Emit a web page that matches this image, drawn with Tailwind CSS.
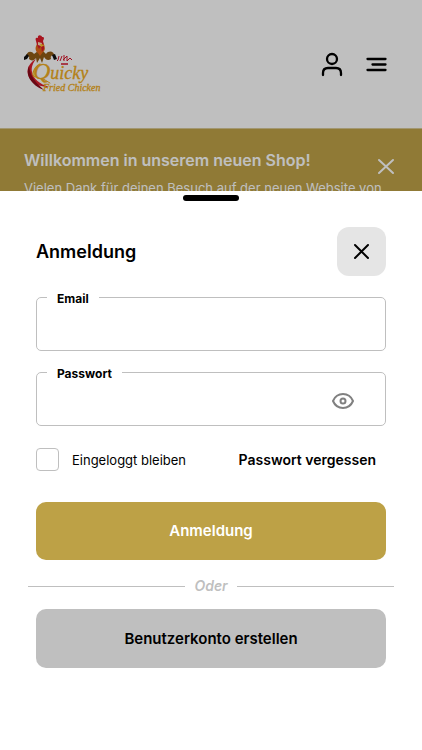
<!DOCTYPE html>
<html lang="de">
<head>
<meta charset="utf-8">
<meta name="viewport" content="width=device-width, initial-scale=1">
<title>Anmeldung</title>
<script src="https://cdn.jsdelivr.net/npm/@tailwindcss/browser@4"></script>
</head>
<body class="relative min-h-screen overflow-hidden bg-white font-['Inter','Liberation_Sans',sans-serif] text-black">
  <header class="flex h-32 items-center justify-between pr-8 pl-6">
    <a href="#" aria-label="Quicky Fried Chicken">
      <svg class="h-16 w-20" viewBox="0 0 80 64">
        <path d="M12 27C3 32 1 41 7 48C11 53 18 55 25 55C16 52 9 47 8 40C7 35 9 31 12 27Z" fill="#e0202f"/>
        <path d="M5 34C1 43 7 53 20 58C12 51 6 44 5 34Z" fill="#8d0b1b"/>
        <path d="M2 25C2 20 7 18 10 22L14 19L16 21L19 19L22 22C25 18 30 19 31 25C28 22 26 24 27 27C24 29 22 28 20 25L18 31L16 26L13 31L12 26C10 29 7 29 5 27C6 24 4 23 2 25Z" fill="#925c15"/>
        <path d="M0 25l3-3 2 2-2 3-3 1zM28 23l3-1 2 5-3 1z" fill="#111"/>
        <path d="M13 12C11 15 11 19 14 21L16 24L19 20C22 18 21 14 19 11Z" fill="#e56a18"/>
        <path d="M12 9C11 6 12 5 14 6C13 2 18 3 18 5C21 5 20 7 19 9C20 12 20 15 20 17L18 20L17 14L15 17L13 13Z" fill="#df1b2a"/>
        <path d="M14 10l4 1-1 3-3-1z" fill="#ffe3b8"/>
        <path d="M16 12l5 1-4 2z" fill="#ffc629"/>
        <path d="M35 24l-1 4-1 1M38 24l-2 5M40 23v6M39 28l4-4v5l3-3 2 2" fill="none" stroke="#d5162b" stroke-width="1"/>
        <path d="M37 32h7" stroke="#d5162b" stroke-width="1.500"/>
        <path d="M16 32C9 36 7 44 11 45" fill="none" stroke="#f0ac20" stroke-width="1.200" stroke-linecap="round"/>
        <text x="9" y="47" fill="#f0ac20" stroke="#f0ac20" stroke-width=".3" font-family="Liberation Serif, serif" font-style="italic" font-size="18"><tspan font-size="24">Q</tspan>uicky</text>
        <path d="M14 46Q20 46 26 51" fill="none" stroke="#f0ac20" stroke-width="1" stroke-linecap="round"/>
        <text x="19" y="59" fill="#f0ac20" stroke="#f0ac20" stroke-width=".3" font-family="Liberation Serif, serif" font-style="italic" font-size="10">Fried Chicken</text>
      </svg>
    </a>
    <nav class="flex gap-4">
      <button type="button" aria-label="Konto" class="grid size-7 place-items-center">
        <svg class="size-7" viewBox="0 0 28 28" fill="none" stroke="currentColor" stroke-width="2.3" stroke-linecap="round"><circle cx="14" cy="9" r="5"/><path d="M5 25v-2q0-5 5-5h8q5 0 5 5v2"/></svg>
      </button>
      <button type="button" aria-label="Menü" class="grid size-7 place-items-center">
        <svg class="size-7" viewBox="0 0 28 28" fill="none" stroke="currentColor" stroke-width="2.3" stroke-linecap="round"><path d="M5.500 9h18M10.500 14.500h13M5.500 20h18"/></svg>
      </button>
    </nav>
  </header>
  <section class="flex h-40 items-start justify-between border-t border-[#d8ca97] bg-[#c0a348] px-6 pt-[19px] text-white">
    <div class="shrink-0 whitespace-nowrap">
      <h2 class="text-base leading-6 font-semibold">Willkommen in unserem neuen Shop!</h2>
      <p class="mt-1 text-[13px] leading-6">Vielen Dank für deinen Besuch auf der neuen Website von</p>
    </div>
    <button type="button" aria-label="Hinweis schließen" class="absolute right-6 mt-[6px]">
      <svg class="size-6" viewBox="0 0 24 24" fill="none" stroke="currentColor" stroke-width="2" stroke-linecap="round"><path d="M5 6l14 13M19 6L5 19"/></svg>
    </button>
  </section>
  <div class="absolute inset-0 bg-black/25"></div>

  <main role="dialog" aria-labelledby="title" class="absolute inset-x-0 bottom-0 bg-white px-9 pt-1 pb-[82px]">
    <div class="mx-auto h-[6px] w-14 rounded-full bg-black"></div>
    <div class="mt-[26px] flex items-center justify-between">
      <h1 id="title" class="text-lg leading-6 font-semibold">Anmeldung</h1>
      <button type="button" aria-label="Schließen" class="grid size-[49px] place-items-center rounded-xl bg-[#e5e5e5]">
        <svg class="size-6" viewBox="0 0 24 24" fill="none" stroke="currentColor" stroke-width="2" stroke-linecap="round"><path d="M5 5l13 13M18 5L5 18"/></svg>
      </button>
    </div>
    <form class="mt-[11px]">
      <fieldset class="h-16 rounded-[5px] border border-[#bfbfbf] px-[10px]">
        <legend class="px-[10px] pt-1 text-xs leading-4 font-bold"><label for="email">Email</label></legend>
        <input id="email" type="email" class="h-10 w-full px-2 text-sm outline-none">
      </fieldset>
      <fieldset class="mt-[11px] h-16 rounded-[5px] border border-[#bfbfbf] px-[10px]">
        <legend class="px-[10px] pt-1 text-xs leading-4 font-bold"><label for="password">Passwort</label></legend>
        <div class="flex items-center pr-5">
          <input id="password" type="password" class="h-10 min-w-0 flex-1 px-2 text-sm outline-none">
          <button type="button" aria-label="Passwort anzeigen" class="text-[#808080]">
            <svg class="size-6" viewBox="0 0 24 24" fill="none" stroke="currentColor" stroke-width="2"><path d="M2 11C6 1.700 18 1.700 22 11C18 20.300 6 20.300 2 11Z" stroke-linejoin="round"/><circle cx="12" cy="11" r="2.500"/></svg>
          </button>
        </div>
      </fieldset>
      <div class="mt-[22px] flex items-center justify-between pr-[10px]">
        <div class="flex items-center gap-[13px]">
          <input id="stay" type="checkbox" class="size-[23px] appearance-none rounded-[4px] border border-[#bfbfbf] checked:bg-[#bda146]">
          <label for="stay" class="text-[13px] leading-5">Eingeloggt bleiben</label>
        </div>
        <a href="#" class="text-sm leading-5 font-semibold">Passwort vergessen</a>
      </div>
      <button type="submit" class="mt-[31px] h-[58px] w-full rounded-[10px] bg-[#bda146] pt-px text-[15px] font-semibold text-white">Anmeldung</button>
      <div class="-mx-2 mt-4 flex items-center gap-[9px] text-sm leading-5 font-semibold text-[#bfbfbf] italic">
        <span class="h-px flex-1 bg-[#bfbfbf]"></span>Oder<span class="h-px flex-1 bg-[#bfbfbf]"></span>
      </div>
      <button type="button" class="mt-[13px] h-[59px] w-full rounded-[10px] bg-[#bfbfbf] pt-px text-[15px] font-semibold">Benutzerkonto erstellen</button>
    </form>
  </main>
</body>
</html>
